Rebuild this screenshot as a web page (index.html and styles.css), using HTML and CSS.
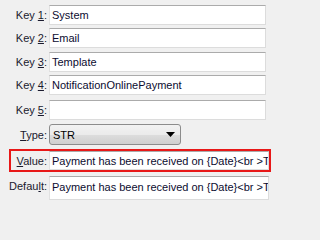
FILE: index.html
```html
<!DOCTYPE html>
<html>
<head>
<meta charset="utf-8">
<link rel="stylesheet" href="styles.css">
</head>
<body>
<div class="form">
  <div class="row r1"><label class="lbl">Key <u>1</u>:</label><div class="field">System</div></div>
  <div class="row r2"><label class="lbl">Key <u>2</u>:</label><div class="field">Email</div></div>
  <div class="row r3"><label class="lbl">Key <u>3</u>:</label><div class="field">Template</div></div>
  <div class="row r4"><label class="lbl">Key <u>4</u>:</label><div class="field">NotificationOnlinePayment</div></div>
  <div class="row r5"><label class="lbl">Key <u>5</u>:</label><div class="field"></div></div>
  <div class="row rtype"><label class="lbl"><u>T</u>ype:</label>
    <div class="combo"><span>STR</span>
      <svg class="arrow" width="9" height="5" viewBox="0 0 9 5"><path d="M0 0H9L4.5 5Z" fill="#000"/></svg>
    </div>
  </div>
  <div class="row rvalue"><label class="lbl"><u>V</u>alue:</label><div class="field wide">Payment has been received on {Date}&lt;br &gt;Thank</div></div>
  <div class="row rdefault"><label class="lbl">Defau<u>l</u>t:</label><div class="field wide">Payment has been received on {Date}&lt;br &gt;Thank</div></div>
</div>
</body>
</html>
```
FILE: styles.css
```css
html, body {
  margin: 0;
  padding: 0;
  background: #f0f0f0;
  width: 272px;
  height: 201px;
  overflow: hidden;
}
.form {
  font-family: "Liberation Sans", Arial, sans-serif;
  font-size: 11px;
  color: #1a1a2e;
  padding-top: 5px;
  display: flex;
  flex-direction: column;
}
.row {
  display: flex;
  align-items: center;
  height: 20px;
}
.r2 { margin-top: 3px; }
.r3 { margin-top: 4px; }
.r4 { margin-top: 3px; }
.r5 { margin-top: 5px; }
.rtype { margin-top: 4px; height: 21px; }
.lbl {
  width: 49px;
  box-sizing: border-box;
  padding-right: 2px;
  text-align: right;
  white-space: nowrap;
  flex: none;
}
.field {
  width: 217px;
  height: 20px;
  box-sizing: border-box;
  background: #fff;
  border: 1px solid #dcdcdc;
  border-top-color: #ababab;
  border-left-color: #e2e2e2;
  padding-left: 2px;
  line-height: 19px;
  white-space: nowrap;
  overflow: hidden;
  color: #0c0c30;
}
.field.wide { width: 220px; }
.combo {
  width: 132px;
  height: 21px;
  box-sizing: border-box;
  border: 1px solid #8c8c8c;
  border-radius: 3px;
  background: linear-gradient(#f2f2f2 0%, #ebebeb 50%, #dddddd 51%, #cfcfcf 100%);
  display: flex;
  align-items: center;
  justify-content: space-between;
  padding: 0 5px 0 3px;
  color: #000;
}
.arrow { display: block; }
.rvalue {
  margin: 4px 1px 0 9px;
  height: 23px;
  box-sizing: border-box;
  border: 2px solid #e81818;
}
.rvalue .lbl { width: 38px; }
.rvalue .field { width: 220px; height: 19px; line-height: 18px; }
.rdefault { margin-top: 4px; height: 24px; align-items: flex-start; }
.rdefault .field { height: 24px; line-height: 20px; }
.rdefault .lbl { line-height: 20px; }
```
